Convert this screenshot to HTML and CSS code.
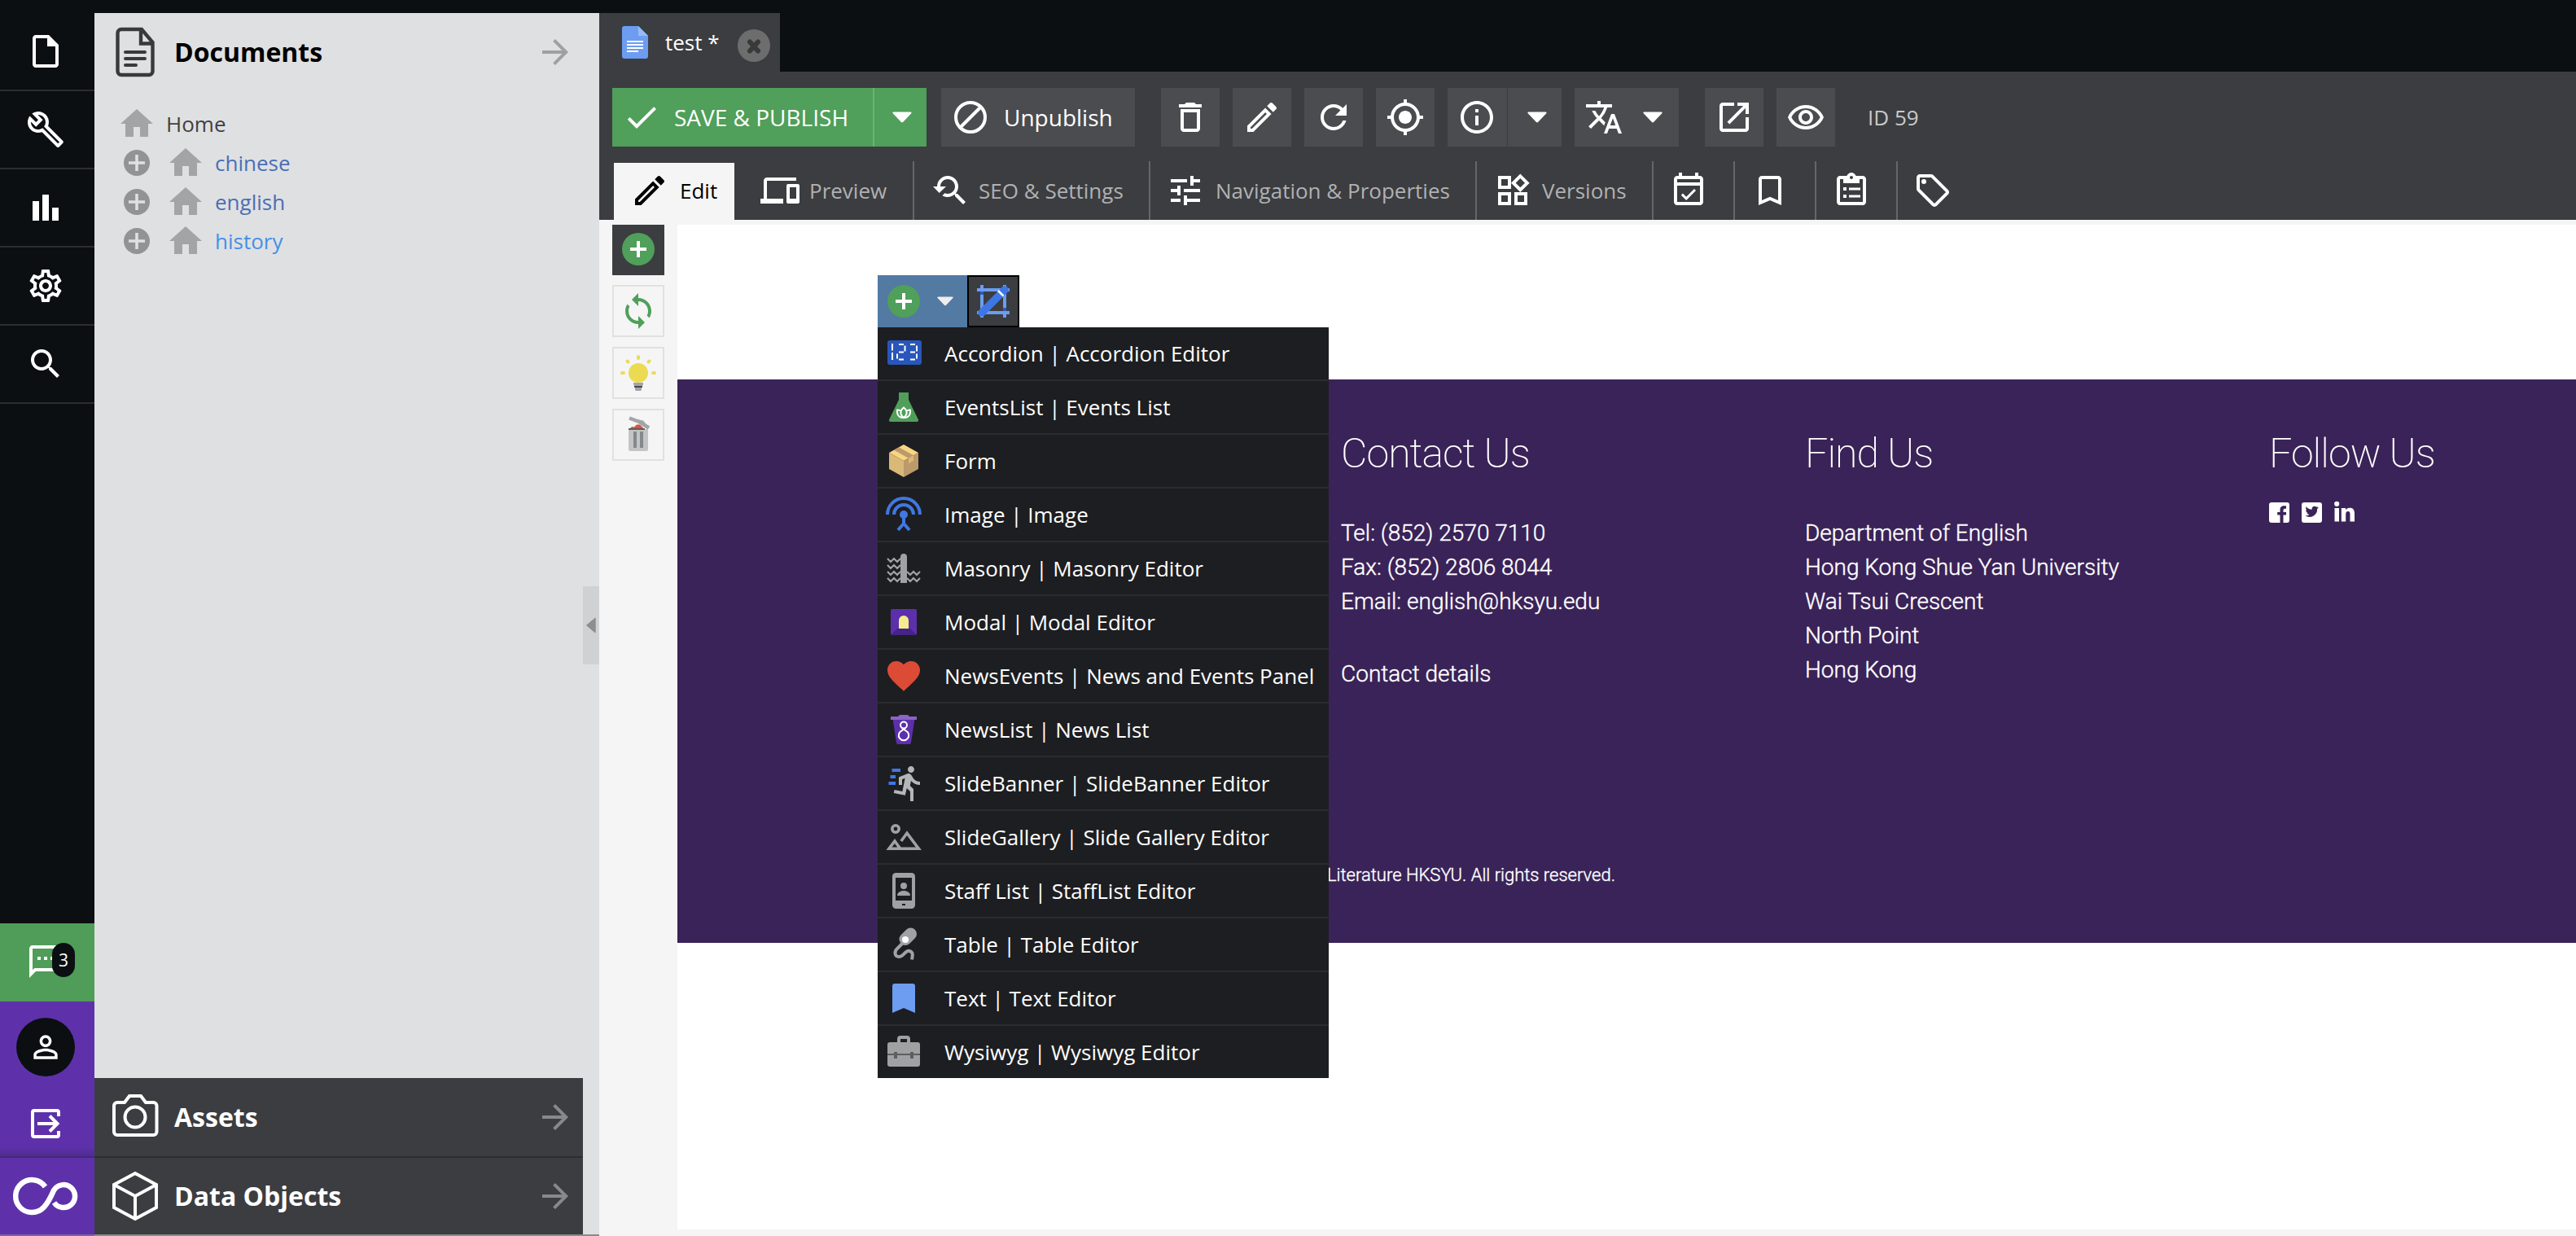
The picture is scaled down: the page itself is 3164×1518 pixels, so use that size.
FILE: index.html
```html
<!DOCTYPE html>
<html lang="en">
<head>
<meta charset="utf-8">
<title>test - Documents</title>
<link rel="stylesheet" href="styles.css">
</head>
<body>
<svg class="defs" aria-hidden="true">
  <symbol id="arrow" viewBox="0 0 24 24"><path d="M12 4l-1.41 1.41L16.17 11H4v2h12.17l-5.58 5.59L12 20l8-8z"/></symbol>
  <symbol id="home" viewBox="0 0 24 24"><path d="M10 20v-6h4v6h5v-8h3L12 3 2 12h3v8z"/></symbol>
  <symbol id="expand" viewBox="0 0 32 32"><circle cx="16" cy="16" r="16" fill="#929394"/><path d="M16 6v20M6 16h20" stroke="#dfe0e2" stroke-width="3.6"/></symbol>
  <symbol id="plus" viewBox="0 0 40 40"><circle cx="20" cy="20" r="20" fill="#509f5a"/><path d="M20 10v20M10 20h20" stroke="#fff" stroke-width="4"/></symbol>
  <symbol id="pencil" viewBox="0 0 24 24"><path d="M14.06 9.02l.92.92L5.92 19H5v-.92l9.06-9.06M17.66 3c-.25 0-.51.1-.7.29l-1.83 1.83 3.75 3.75 1.83-1.83c.39-.39.39-1.02 0-1.41l-2.34-2.34c-.2-.2-.45-.29-.71-.29zm-3.6 3.19L3 17.25V21h3.75L17.81 9.94l-3.75-3.75z"/></symbol>
  <symbol id="caret" viewBox="0 0 24 14"><path d="M1.5.5h21c1 0 1.4 1 .8 1.7l-10 10.6c-.8.8-1.8.8-2.6 0L.7 2.200C0 1.500.5.5 1.500.5z"/></symbol>
</svg>

<div class="app">
  <nav class="rail">
    <div class="rail-item"><svg class="ic" viewBox="0 0 24 24"><path d="M6 2c-1.1 0-1.99.9-1.99 2L4 20c0 1.1.89 2 1.99 2H18c1.1 0 2-.9 2-2V8l-6-6H6zm0 2h7v5h5v11H6V4z"/></svg></div>
    <div class="rail-item"><svg class="ic" viewBox="0 0 24 24"><path d="M22.61 18.99l-9.08-9.08c.93-2.34.45-5.1-1.44-7C9.79.61 6.21.4 3.66 2.26L7.5 6.11 6.08 7.52 2.25 3.69C.39 6.23.6 9.82 2.9 12.11c1.86 1.86 4.57 2.35 6.89 1.48l9.11 9.11c.39.39 1.02.39 1.41 0l2.3-2.3c.4-.38.4-1.01 0-1.41zm-3 1.6l-9.46-9.46c-.61.45-1.29.72-2 .82-1.36.2-2.79-.21-3.83-1.25C3.37 9.76 2.93 8.5 3 7.26l3.09 3.09 4.24-4.24-3.09-3.09c1.24-.07 2.49.37 3.44 1.31 1.08 1.08 1.49 2.57 1.24 3.96-.12.71-.42 1.37-.88 1.96l9.45 9.45-.88.89z"/></svg></div>
    <div class="rail-item"><svg class="ic" viewBox="0 0 24 24"><path d="M4 8h4v12H4zM10 4h4v16h-4zM16 12h4v8h-4z"/></svg></div>
    <div class="rail-item"><svg class="ic" viewBox="0 0 24 24"><path d="M19.43 12.98c.04-.32.07-.64.07-.98 0-.34-.03-.66-.07-.98l2.11-1.65c.19-.15.24-.42.12-.64l-2-3.46c-.09-.16-.26-.25-.44-.25-.06 0-.12.01-.17.03l-2.49 1c-.52-.4-1.08-.73-1.69-.98l-.38-2.65C14.46 2.18 14.25 2 14 2h-4c-.25 0-.46.18-.49.42l-.38 2.65c-.61.25-1.17.59-1.69.98l-2.49-1c-.06-.02-.12-.03-.18-.03-.17 0-.34.09-.43.25l-2 3.46c-.13.22-.07.49.12.64l2.110 1.65c-.04.32-.07.65-.07.98 0 .33.03.66.07.98l-2.110 1.65c-.19.15-.24.42-.12.64l2 3.46c.09.16.26.25.44.25.06 0 .12-.01.17-.03l2.490-1c.52.4 1.08.73 1.69.98l.38 2.65c.03.24.24.42.49.42h4c.25 0 .46-.18.49-.42l.38-2.65c.61-.25 1.17-.59 1.69-.98l2.490 1c.06.02.12.03.18.03.17 0 .34-.09.43-.25l2-3.46c.12-.22.07-.49-.12-.64l-2.110-1.65zm-1.98-1.71c.04.31.05.52.05.73 0 .21-.02.43-.05.73l-.14 1.13.89.7 1.08.84-.7 1.21-1.27-.51-1.04-.42-.9.68c-.43.32-.84.56-1.25.73l-1.06.43-.16 1.13-.2 1.35h-1.4l-.19-1.35-.16-1.13-1.06-.43c-.43-.18-.83-.41-1.23-.71l-.91-.7-1.06.43-1.27.51-.7-1.21 1.08-.84.89-.7-.14-1.13c-.03-.31-.05-.54-.05-.74s.02-.43.05-.73l.14-1.13-.89-.7-1.08-.84.7-1.21 1.27.51 1.04.42.9-.68c.43-.32.84-.56 1.25-.73l1.06-.43.16-1.13.2-1.35h1.39l.19 1.35.16 1.13 1.06.43c.43.18.83.41 1.23.71l.91.7 1.06-.43 1.27-.51.7 1.21-1.07.85-.89.7.14 1.13zM12 8c-2.21 0-4 1.79-4 4s1.79 4 4 4 4-1.79 4-4-1.79-4-4-4zm0 6c-1.1 0-2-.9-2-2s.9-2 2-2 2 .9 2 2-.9 2-2 2z"/></svg></div>
    <div class="rail-item"><svg class="ic" viewBox="0 0 24 24"><path d="M15.5 14h-.79l-.28-.27C15.41 12.59 16 11.11 16 9.5 16 5.91 13.09 3 9.5 3S3 5.91 3 9.5 5.91 16 9.5 16c1.61 0 3.09-.59 4.23-1.57l.27.28v.79l5 4.99L20.49 19l-4.99-5zm-6 0C7.01 14 5 11.99 5 9.5S7.01 5 9.5 5 14 7.01 14 9.5 11.99 14 9.5 14z"/></svg></div>
    <div class="rail-fill"></div>
    <div class="notify"><svg class="ic" viewBox="0 0 24 24"><path d="M20 2H4c-1.1 0-2 .9-2 2v18l4-4h14c1.1 0 2-.9 2-2V4c0-1.1-.9-2-2-2zm0 14H5.17L4 17.17V4h16v12zM7 9h2v2H7zm4 0h2v2h-2zm4 0h2v2h-2z"/></svg><span class="count">3</span></div>
    <div class="user"><span class="avatar"><svg class="person" viewBox="0 0 24 24"><path d="M12 5.9c1.16 0 2.1.94 2.1 2.1s-.94 2.1-2.1 2.1S9.9 9.16 9.900 8s.94-2.1 2.1-2.1m0 9c2.97 0 6.1 1.46 6.1 2.100v1.1H5.9V17c0-.64 3.13-2.1 6.1-2.1M12 4C9.79 4 8 5.79 8 8s1.79 4 4 4 4-1.79 4-4-1.79-4-4-4zm0 9c-2.67 0-8 1.34-8 4v3h16v-3c0-2.66-5.33-4-8-4z"/></svg></span></div>
    <div class="logout"><svg class="ic line" viewBox="0 0 48 48"><path d="M40 15V10a2 2 0 0 0-2-2H10a2 2 0 0 0-2 2v28a2 2 0 0 0 2 2h28a2 2 0 0 0 2-2v-5M14 24h24M29 14.500L38.500 24 29 33.500"/></svg></div>
    <div class="brand"><svg class="logo" viewBox="0 0 84 50"><path d="M41.500 13.500A20 20 0 1 0 40 38.500C46 32 48.500 26 52 18A14 14 0 1 1 52.500 33" fill="none" stroke="#fff" stroke-width="6.500"/></svg></div>
  </nav>

  <aside class="panel">
    <header class="panel-head">
      <svg class="head-ic" viewBox="0 0 72 72"><path d="M44 8H19a4.500 4.500 0 0 0-4.500 4.500v47A4.500 4.500 0 0 0 19 64h34a4.500 4.500 0 0 0 4.500-4.500V24zM43 8v17.500h15" fill="none" stroke="#3a3a3a" stroke-width="4.400"/><path d="M24 36h24M24 44h24M24 52h13" stroke="#3a3a3a" stroke-width="4" stroke-linecap="round"/></svg>
      <span class="head-t">Documents</span>
      <svg class="ic go"><use href="#arrow"/></svg>
    </header>
    <ul class="tree">
      <li class="node root"><svg class="house"><use href="#home"/></svg><span>Home</span></li>
      <li class="node"><svg class="exp"><use href="#expand"/></svg><svg class="house"><use href="#home"/></svg><span class="blue">chinese</span></li>
      <li class="node"><svg class="exp"><use href="#expand"/></svg><svg class="house"><use href="#home"/></svg><span class="blue">english</span></li>
      <li class="node"><svg class="exp"><use href="#expand"/></svg><svg class="house"><use href="#home"/></svg><span class="sky">history</span></li>
    </ul>
    <div class="grip"><svg class="grip-ic" viewBox="0 0 12 20"><path d="M11 1.500v17L1 10z" fill="#8e8e8f" stroke="#8e8e8f" stroke-width="1.500" stroke-linejoin="round"/></svg></div>
    <div class="folded">
      <svg class="head-ic line" viewBox="0 0 72 72"><path d="M36 10h7l6 8h9.500a4 4 0 0 1 4 4v32a4 4 0 0 1-4 4H14a4 4 0 0 1-4-4V22a4 4 0 0 1 4-4h9l6-8z"/><circle cx="36" cy="36" r="12.500"/></svg>
      <span class="head-t">Assets</span>
      <svg class="ic go"><use href="#arrow"/></svg>
    </div>
    <div class="folded last">
      <svg class="head-ic line" viewBox="0 0 72 72"><path d="M36 8L62 22V50L36 64 10 50V22zM10 22L36 36 62 22M36 36v28"/></svg>
      <span class="head-t">Data Objects</span>
      <svg class="ic go"><use href="#arrow"/></svg>
    </div>
  </aside>

  <main class="work">
    <div class="doc-tabs">
      <div class="doc-tab">
        <svg class="doc-ic" viewBox="0 0 32 40"><path d="M3 0h17l12 12v25a3 3 0 0 1-3 3H3a3 3 0 0 1-3-3V3a3 3 0 0 1 3-3z" fill="#6c9df0"/><path d="M20 0l12 12H20z" fill="#95bbf7"/><path d="M6 19h20M6 23h20M6 27h20M6 31h14" stroke="#fff" stroke-width="2"/></svg>
        <span class="doc-t">test *</span>
        <svg class="close" viewBox="0 0 40 40"><circle cx="20" cy="20" r="20" fill="#6d6d6e"/><path d="M15 15.500l10 11M25 15.500l-10 11" stroke="#38393b" stroke-width="6" stroke-linecap="round"/></svg>
      </div>
    </div>
    <div class="tools">
      <div class="save"><svg class="ic" viewBox="0 0 24 24"><path d="M9 16.170L4.830 12l-1.420 1.410L9 19 21 7l-1.410-1.410z"/></svg><span class="save-t">SAVE &amp; PUBLISH</span><span class="save-drop"><svg class="caret"><use href="#caret"/></svg></span></div>
      <div class="btn unpub"><svg class="ic line" viewBox="0 0 48 48"><circle cx="24" cy="24" r="18"/><path d="M11 37L37 11"/></svg><span>Unpublish</span></div>
      <div class="btn sq"><svg class="ic" viewBox="0 0 24 24"><path d="M16 9v10H8V9h8m-1.500-6h-5l-1 1H5v2h14V4h-3.500l-1-1zM18 7H6v12c0 1.100.9 2 2 2h8c1.100 0 2-.9 2-2V7z"/></svg></div>
      <div class="btn sq"><svg class="ic"><use href="#pencil"/></svg></div>
      <div class="btn sq"><svg class="ic" viewBox="0 0 24 24"><path d="M17.650 6.350C16.200 4.900 14.210 4 12 4c-4.420 0-7.990 3.580-7.990 8s3.570 8 7.990 8c3.730 0 6.840-2.550 7.730-6h-2.080c-.82 2.330-3.040 4-5.650 4-3.310 0-6-2.690-6-6s2.690-6 6-6c1.660 0 3.140.69 4.220 1.780L13 11h7V4l-2.350 2.350z"/></svg></div>
      <div class="btn sq"><svg class="ic" viewBox="0 0 24 24"><path d="M12 8c-2.210 0-4 1.790-4 4s1.790 4 4 4 4-1.790 4-4-1.790-4-4-4zm8.940 3c-.46-4.170-3.770-7.480-7.940-7.940V1h-2v2.060C6.830 3.520 3.520 6.830 3.060 11H1v2h2.060c.46 4.170 3.770 7.480 7.940 7.940V23h2v-2.060c4.170-.46 7.480-3.770 7.940-7.940H23v-2h-2.060zM12 19c-3.870 0-7-3.130-7-7s3.130-7 7-7 7 3.130 7 7-3.130 7-7 7z"/></svg></div>
      <div class="split"><div class="btn sq"><svg class="ic" viewBox="0 0 24 24"><path d="M11 7h2v2h-2zm0 4h2v6h-2zm1-9C6.480 2 2 6.480 2 12s4.480 10 10 10 10-4.480 10-10S17.520 2 12 2zm0 18c-4.410 0-8-3.590-8-8s3.590-8 8-8 8 3.590 8 8-3.590 8-8 8z"/></svg></div><div class="btn drop"><svg class="caret"><use href="#caret"/></svg></div></div>
      <div class="btn lang"><svg class="ic" viewBox="0 0 24 24"><path d="M12.870 15.070l-2.540-2.510.03-.03A17.520 17.520 0 0 0 14.070 6H17V4h-7V2H8v2H1v1.990h11.170C11.500 7.920 10.440 9.750 9 11.350 8.070 10.320 7.300 9.190 6.690 8h-2c.73 1.630 1.730 3.170 2.980 4.560l-5.090 5.020L4 19l5-5 3.110 3.110.76-2.040zM18.500 10h-2L12 22h2l1.120-3h4.750L21 22h2l-4.500-12zm-2.620 7l1.620-4.330L19.120 17h-3.240z"/></svg><svg class="caret"><use href="#caret"/></svg></div>
      <div class="btn sq open"><svg class="ic" viewBox="0 0 24 24"><path d="M19 19H5V5h7V3H5c-1.110 0-2 .9-2 2v14c0 1.100.89 2 2 2h14c1.100 0 2-.9 2-2v-7h-2v7zM14 3v2h3.590l-9.830 9.830 1.410 1.410L19 6.410V10h2V3h-7z"/></svg></div>
      <div class="btn sq"><svg class="ic" viewBox="0 -.5 24 24"><path d="M12 6c3.790 0 7.170 2.130 8.820 5.500C19.170 14.870 15.790 17 12 17s-7.170-2.130-8.820-5.500C4.830 8.130 8.210 6 12 6m0-2C7 4 2.730 7.110 1 11.500 2.730 15.890 7 19 12 19s9.270-3.110 11-7.500C21.270 7.110 17 4 12 4zm0 5c1.380 0 2.500 1.120 2.500 2.500S13.380 14 12 14s-2.500-1.120-2.500-2.500S10.620 9 12 9m0-2c-2.480 0-4.500 2.020-4.500 4.500S9.520 16 12 16s4.500-2.020 4.500-4.500S14.480 7 12 7z"/></svg></div>
      <span class="doc-id">ID 59</span>
    </div>
    <div class="tabs">
      <div class="tab active"><svg class="ic"><use href="#pencil"/></svg><span>Edit</span></div>
      <div class="tab preview"><svg class="ic" viewBox="0 0 24 24"><path d="M4 6h18V4H4c-1.100 0-2 .9-2 2v11H0v3h14v-3H4V6zm19 2h-6c-.55 0-1 .45-1 1v10c0 .55.45 1 1 1h6c.55 0 1-.45 1-1V9c0-.55-.45-1-1-1zm-1 9h-4v-7h4v7z"/></svg><span>Preview</span></div>
      <div class="tab seo"><svg class="ic" viewBox="0 0 24 24"><path d="M17.010 14h-.8l-.27-.27c.98-1.140 1.570-2.610 1.570-4.230 0-3.590-2.910-6.500-6.500-6.500s-6.500 3-6.500 6.500H2l3.840 4 4.160-4H6.510C6.510 7 8.530 5 11.010 5s4.500 2.010 4.500 4.500c0 2.480-2.020 4.500-4.500 4.500-.65 0-1.260-.14-1.820-.38L7.710 15.100c.97.57 2.090.9 3.300.9 1.610 0 3.080-.59 4.220-1.570l.27.27v.79l5.010 5L22 19l-4.990-5z"/></svg><span>SEO &amp; Settings</span></div>
      <div class="tab nav"><svg class="ic" viewBox="0 0 24 24"><path d="M3 17v2h6v-2H3zM3 5v2h10V5H3zm10 16v-2h8v-2h-8v-2h-2v6h2zM7 9v2H3v2h4v2h2V9H7zm14 4v-2H11v2h10zm-6-4h2V7h4V5h-4V3h-2v6z"/></svg><span>Navigation &amp; Properties</span></div>
      <div class="tab ver"><svg class="ic" viewBox="0 0 24 24"><path d="M16.660 4.520l2.830 2.830-2.830 2.830-2.830-2.830 2.830-2.830M9 5v4H5V5h4m10 10v4h-4v-4h4M9 15v4H5v-4h4m7.660-13.310L11 7.340 16.660 13l5.660-5.660-5.660-5.650zM11 3H3v8h8V3zm10 10h-8v8h8v-8zm-10 0H3v8h8v-8z"/></svg><span>Versions</span></div>
      <div class="tab mini"><svg class="ic" viewBox="0 0 24 24"><path d="M16.530 12.060L15.470 11l-4.880 4.880-2.120-2.120-1.060 1.060L10.590 18l5.940-5.940zM19 3h-1V1h-2v2H8V1H6v2H5c-1.110 0-1.990.9-1.990 2L3 19c0 1.100.89 2 2 2h14c1.100 0 2-.9 2-2V5c0-1.100-.9-2-2-2zm0 16H5V9h14v10zm0-12H5V5h14v2z"/></svg></div>
      <div class="tab mini"><svg class="ic" viewBox="0 0 24 24"><path d="M17 3H7c-1.100 0-1.990.9-1.990 2L5 21l7-3 7 3V5c0-1.100-.9-2-2-2zm0 15l-5-2.180L7 18V5h10v13z"/></svg></div>
      <div class="tab mini"><svg class="ic" viewBox="0 0 24 24"><path d="M19 3h-4.180C14.400 1.840 13.300 1 12 1s-2.400.84-2.820 2H5c-1.100 0-2 .9-2 2v14c0 1.100.9 2 2 2h14c1.100 0 2-.9 2-2V5c0-1.100-.9-2-2-2zm-7 0c.55 0 1 .45 1 1s-.45 1-1 1-1-.45-1-1 .45-1 1-1zm7 16H5V5h2v2.500h10V5h2v14zM7 10h2v2H7zm3.500.3h7v1.500h-7zM7 14.500h2v2H7zm3.500.3h7v1.500h-7z"/></svg></div>
      <div class="tab mini"><svg class="ic" viewBox="0 0 24 24"><path d="M21.410 11.580l-9-9C12.050 2.220 11.550 2 11 2H4c-1.100 0-2 .9-2 2v7c0 .55.22 1.050.59 1.420l9 9c.36.36.86.58 1.410.58s1.050-.22 1.410-.59l7-7c.37-.36.59-.86.59-1.410s-.23-1.060-.59-1.420zM13 20.010L4 11V4h7v-.01l9 9-7 7.020z"/><circle cx="6.500" cy="6.500" r="1.500"/></svg></div>
    </div>

    <div class="editor">
      <div class="side-tools">
        <div class="side dark"><svg class="forty"><use href="#plus"/></svg></div>
        <div class="side"><svg class="ic green" viewBox="0 0 24 24"><path d="M12 4V1L8 5l4 4V6c3.310 0 6 2.690 6 6 0 1.010-.25 1.970-.7 2.800l1.460 1.460C19.540 15.030 20 13.570 20 12c0-4.420-3.580-8-8-8zm0 14c-3.310 0-6-2.690-6-6 0-1.010.25-1.970.7-2.800L5.240 7.740C4.460 8.970 4 10.430 4 12c0 4.420 3.580 8 8 8v3l4-4-4-4v3z"/></svg></div>
        <div class="side"><svg class="ic" viewBox="0 0 48 48"><path d="M24 4v2M10.500 9.500l1 1M37.500 9.500l-1 1M4 24h2M42 24h2" stroke="#ebdb59" stroke-width="4" stroke-linecap="round"/><circle cx="24" cy="24" r="12" fill="#ebdb52"/><path d="M18 36h12v2l-1 2H19l-1-2z" fill="#a3a4a6"/><path d="M19 40h10v2H19z" fill="#4a4a55"/><path d="M20 42h8v3l-1 1h-6l-1-1z" fill="#a3a4a6"/></svg></div>
        <div class="side"><svg class="ic" viewBox="0 0 48 48"><path d="M14 16l2-2 3 .500 3-3 4 0 4 4v2z" fill="#dd4f3b"/><path d="M12 17h24v25a2 2 0 0 1-2 2H14a2 2 0 0 1-2-2z" fill="#c3c4c5"/><path d="M12 16h20v2H12z" fill="#5d5e60"/><path d="M20 20v20M28 20v20" stroke="#87888a" stroke-width="4"/><path d="M13 3.500l12 4.500 12 7.500" stroke="#a3a4a6" stroke-width="4.500" fill="none"/><path d="M22 5l8 1.500 4 5" fill="#a3a4a6"/></svg></div>
      </div>
      <div class="page">
        <div class="blank">
          <div class="block-bar">
            <div class="block-add"><svg class="forty"><use href="#plus"/></svg><svg class="mini-caret"><use href="#caret"/></svg></div>
            <div class="block-edit"><svg class="forty" viewBox="0 0 40 40"><path d="M6 0v40M34 0v40M0 6h40M0 34h40" stroke="#6c9df0" stroke-width="4"/><path d="M6 8v4M34 28v4" stroke="#2a5bc4" stroke-width="4"/><path d="M6 34L34 6" stroke="#3d77e6" stroke-width="9.500" stroke-linecap="round"/><path d="M26 7l6.500 6.500" stroke="#fff" stroke-width="2.500"/></svg></div>
            <ul class="menu">
              <li><svg class="ic" viewBox="0 0 48 48"><rect x="4" y="8" width="42" height="30" rx="3" fill="#2956bb"/><path d="M10 12v8.500M10 23v9M18 13h6M25.500 14.500v7M18 22.500h6M16 24.500v6M18 31.500h6M32 13h6M40 14.500v7M32 22.500h6M40 24.500v6M32 31.500h6" stroke="#fff" stroke-width="2"/></svg><span>Accordion | Accordion Editor</span></li>
              <li><svg class="ic" viewBox="0 0 48 48"><path d="M18 6h12v9l12 24.500a2 2 0 0 1-1.500 2.500h-33A2 2 0 0 1 6 39.500L18 15z" fill="#519e5b"/><path d="M24 37c-5.500-4-4-9.500 0-12.500 4 3 5.500 8.500 0 12.500zM24 37c-6 .5-8.500-4-8-9.500 3-.5 4 .5 5 2M24 37c6 .5 8.500-4 8-9.500-3-.5-4 .5-5 2" fill="none" stroke="#fff" stroke-width="2"/></svg><span>EventsList | Events List</span></li>
              <li><svg class="ic" viewBox="0 0 48 48"><path d="M24 4l18 10-18 10L6 14z" fill="#f6d681"/><path d="M6 14l18 10v20L6 34z" fill="#dab877"/><path d="M42 14L24 24v20l18-10z" fill="#bc9a6c"/><path d="M12 10.700l6-3.400 18 10-6 3.400z" fill="#bc9a6c"/><path d="M30 20.700l6-3.400v6.500l-6 3.400z" fill="#dab877"/></svg><span>Form</span></li>
              <li><svg class="ic" viewBox="0 0 48 48"><path d="M4 24a20 20 0 0 1 40 0M12 24a12 12 0 0 1 24 0M24 24v11M17 43l7-8 7 8" fill="none" stroke="#4077e2" stroke-width="4"/><circle cx="24" cy="24" r="5" fill="#4077e2"/></svg><span>Image | Image</span></li>
              <li><svg class="ic" viewBox="0 0 48 48"><path d="M20 42V10a4 4 0 0 1 8 0v32z" fill="#a0a1a3"/><path d="M4 12l4 4 4-4 4 4 4-4M4 20l4 4 4-4 4 4 4-4M4 28l4 4 4-4 4 4 4-4M4 36l4 4 4-4 4 4 4-4M28 28l4 4 4-4 4 4 4-4M28 36l4 4 4-4 4 4 4-4" fill="none" stroke="#a0a1a3" stroke-width="2.200"/></svg><span>Masonry | Masonry Editor</span></li>
              <li><svg class="ic" viewBox="0 0 48 48"><rect x="8" y="8" width="32" height="32" rx="2" fill="#5c30ab"/><path d="M16 32h16l7.500 7.500-1.500.5H10l-1.500-.5z" fill="#44238a"/><path d="M18 32V22a6 6 0 0 1 12 0v10z" fill="#f5ed8c"/></svg><span>Modal | Modal Editor</span></li>
              <li><svg class="ic" viewBox="0 0 24 24"><path d="M12 21.350l-1.450-1.320C5.400 15.360 2 12.280 2 8.500 2 5.420 4.420 3 7.500 3c1.740 0 3.410.81 4.500 2.090C13.090 3.810 14.760 3 16.500 3 19.580 3 22 5.420 22 8.500c0 3.780-3.400 6.860-8.550 11.540L12 21.350z" fill="#dc4b36"/></svg><span>NewsEvents | News and Events Panel</span></li>
              <li><svg class="ic" viewBox="0 0 48 48"><path d="M10.500 11h27L33 40a2 2 0 0 1-2 2H17a2 2 0 0 1-2-2z" fill="#5c30ab"/><path d="M8 8h9l2-2h10l2 2h9v4H8z" fill="#8b64c4"/><circle cx="24" cy="18.500" r="4" fill="none" stroke="#fff" stroke-width="2"/><path d="M21.500 22L26.500 25.300A6.200 6.200 0 1 1 21.500 25.300L26.500 22" fill="none" stroke="#fff" stroke-width="2"/></svg><span>NewsList | News List</span></li>
              <li><svg class="ic" viewBox="0 0 48 48"><path d="M9.500 8H20M7.500 16H14M5.500 24H14" stroke="#4077e2" stroke-width="4"/><path transform="translate(6 0) scale(2)" fill="#b5b6b8" d="M13.490 5.480c1.100 0 2-.9 2-2s-.9-2-2-2-2 .9-2 2 .9 2 2 2zm-3.600 13.900l1-4.400 2.100 2v6h2v-7.500l-2.100-2 .6-3c1.300 1.500 3.300 2.500 5.500 2.500v-2c-1.900 0-3.500-1-4.300-2.400l-1-1.600c-.4-.6-1-1-1.700-1-.3 0-.5.1-.8.1l-5.200 2.200v4.700h2v-3.400l1.800-.7-1.600 8.100-4.900-1-.4 2 7 1.400z"/></svg><span>SlideBanner | SlideBanner Editor</span></li>
              <li><svg class="ic" viewBox="0 0 48 48"><g fill="none" stroke="#a0a1a3" stroke-width="3.600"><circle cx="14" cy="14" r="4.200"/><path d="M19.500 38L13 29 6 38.200H42.300L28 19.200 20.800 29"/></g></svg><span>SlideGallery | Slide Gallery Editor</span></li>
              <li><svg class="ic" viewBox="0 0 48 48"><rect x="10" y="2" width="28" height="44" rx="4.500" fill="#a0a1a3"/><path d="M14 8h20v28H14zM22 40h4v2h-4z" fill="#1d1e21"/><circle cx="24" cy="18" r="4" fill="#a0a1a3"/><path d="M16 30c0-3.500 3.500-6 8-6s8 2.500 8 6z" fill="#a0a1a3"/></svg><span>Staff List | StaffList Editor</span></li>
              <li><svg class="ic" viewBox="0 0 48 48"><path d="M26 17.500l6.500-6.500" stroke="#a0a1a3" stroke-width="15" stroke-linecap="round"/><path d="M23 22l-8 8c-3 4-1.500 9 3 9 6 0 8-8.500 13-7 5 1.500 4 5 3 10.500" fill="none" stroke="#a0a1a3" stroke-width="4"/><circle cx="26" cy="18" r="4" fill="#fff"/></svg><span>Table | Table Editor</span></li>
              <li><svg class="ic" viewBox="0 0 48 48"><path d="M10 42V9a3 3 0 0 1 3-3h22a3 3 0 0 1 3 3v33l-14-6z" fill="#6c9df0"/></svg><span>Text | Text Editor</span></li>
              <li><svg class="ic" viewBox="0 0 48 48"><path d="M18 14V8a2 2 0 0 1 2-2h8a2 2 0 0 1 2 2v6" fill="none" stroke="#a0a1a3" stroke-width="4"/><rect x="4" y="12" width="40" height="30" rx="3" fill="#a0a1a3"/><path d="M4 27h40" stroke="#5d5e60" stroke-width="2"/><path d="M14 24v8M34 24v8" stroke="#5d5e60" stroke-width="4"/></svg><span>Wysiwyg | Wysiwyg Editor</span></li>
            </ul>
          </div>
        </div>
        <footer class="foot">
          <div class="cols">
            <section class="col">
              <h2>Contact Us</h2>
              <p>Tel: (852) 2570 7110<br>Fax: (852) 2806 8044<br>Email: english@hksyu.edu</p>
              <p class="more">Contact details</p>
            </section>
            <section class="col">
              <h2>Find Us</h2>
              <p>Department of English<br>Hong Kong Shue Yan University<br>Wai Tsui Crescent<br>North Point<br>Hong Kong</p>
            </section>
            <section class="col">
              <h2>Follow Us</h2>
              <div class="social">
                <svg viewBox="0 0 26 28"><path fill-rule="evenodd" d="M3 2h19a3 3 0 0 1 3 3v19a3 3 0 0 1-3 3h-4.500v-9.500H21v-3.500h-3.500V12c0-1.500.7-2.200 2-2.200H21V6.300h-2.500c-3.500 0-5 2-5 5V14h-3.300v3.500h3.300V27H3a3 3 0 0 1-3-3V5a3 3 0 0 1 3-3z"/></svg>
                <svg viewBox="0 0 26 28"><path fill-rule="evenodd" d="M3 2h19a3 3 0 0 1 3 3v19a3 3 0 0 1-3 3H3a3 3 0 0 1-3-3V5a3 3 0 0 1 3-3zM21 8.300c-.6.300-1.200.4-1.900.5.600-.4 1.200-1 1.400-1.800-.6.400-1.300.6-2.100.8a3.400 3.400 0 0 0-5.800 3C9.800 10.700 7.300 9.400 5.600 7.300c-.9 1.600-.4 3.400 1 4.400-.5 0-1-.1-1.500-.4 0 1.600 1.100 3 2.700 3.300-.5.100-1 .1-1.500 0 .4 1.300 1.700 2.300 3.100 2.300A6.700 6.700 0 0 1 4.400 18.300 9.400 9.400 0 0 0 19.100 10c.8-.5 1.400-1.100 1.900-1.700z"/></svg>
                <svg viewBox="0 0 26 28"><path d="M.5 9H6v16.500H.5zM8.800 9h5.200v2.300c1-1.700 2.600-2.600 5-2.600 4.500 0 6 2.600 6 7.300v9.500h-5.500V17c0-2.600-.5-4-2.500-4s-2.800 1.500-2.800 4v8.500H8.800z"/><circle cx="3.200" cy="3.800" r="3.100"/></svg>
              </div>
            </section>
          </div>
          <p class="copy">Literature HKSYU. All rights reserved.</p>
        </footer>
      </div>
    </div>
  </main>
</div>
</body>
</html>
```
FILE: styles.css
```css
* { box-sizing: border-box; }
body, h2, p, ul { margin: 0; padding: 0; }
ul { list-style: none; }
body {
  width: 3164px; height: 1518px; overflow: hidden;
  background: #0b0f12; color: #fff;
  font-family: "Open Sans", "Noto Sans", sans-serif; font-size: 26px;
}
.defs { position: absolute; width: 0; height: 0; }
svg { display: block; flex: none; fill: currentColor; }
.ic { width: 48px; height: 48px; }
.line { fill: none; stroke: currentColor; stroke-width: 4; }
.forty { width: 40px; height: 40px; }
.caret { width: 24px; height: 14px; }

.app { display: grid; grid-template-columns: 116px 620px 1fr; height: 1518px; padding-top: 16px; }

/* icon rail */
.rail { display: flex; flex-direction: column; border-bottom: 2px solid #7c64a6; }
.rail-item { height: 96px; padding-right: 4px; border-bottom: 2px solid #2c2d31; display: flex; align-items: center; justify-content: center; }
.rail-fill { flex: 1; }
.notify, .user, .logout, .brand { display: flex; align-items: center; justify-content: center; padding-right: 4px; }
.notify { height: 96px; background: #4f9d58; position: relative; padding-bottom: 2px; }
.count {
  position: absolute; left: 64px; top: 24px; width: 28px; height: 42px; border-radius: 14px;
  background: #0b0f12; font-size: 21px; line-height: 42px; text-align: center;
}
.user { height: 112px; background: #5e31ab; }
.avatar { width: 72px; height: 72px; border-radius: 50%; background: #0b0f12; display: flex; align-items: center; justify-content: center; }
.person { width: 44px; height: 44px; }
.logout { height: 80px; padding-bottom: 2px; border-bottom: 2px solid #44287a; background: linear-gradient(#5e31ab 85%, #4f2c90); }
.brand { height: 94px; background: #5e31ab; }
.logo { width: 84px; height: 50px; }

/* left panel */
.panel { position: relative; display: flex; flex-direction: column; background: #dfe0e2; border-bottom: 2px solid #8a8a8c; }
.panel-head, .folded { display: flex; align-items: center; padding-left: 14px; }
.panel-head { height: 96px; color: #000; }
.head-ic { width: 72px; height: 72px; }
.head-t { margin-left: 12px; font-size: 32px; font-weight: 700; line-height: 44px; flex: 1; }
.go { margin-right: 10px; color: #9fa0a2; }
.panel-head .go { margin-right: 30px; }
.tree { flex: 1; padding: 16px 0 0 28px; }
.node { display: flex; align-items: center; height: 48px; }
.root { color: #3f4043; }
.exp { width: 32px; height: 32px; margin-left: 8px; margin-right: 20px; }
.house { width: 48px; height: 48px; color: #a3a4a6; margin-right: 12px; }
.blue { color: #4a6fb5; }
.sky { color: #4590e6; }
.folded { width: 600px; height: 98px; background: #3c3d40; border-bottom: 2px solid #2c2d30; }
.folded .go { color: #88898b; }
.last { height: 94px; border-bottom: 0; }
.grip { position: absolute; right: 0; top: 704px; width: 20px; height: 96px; background: #d0d1d3; display: flex; align-items: center; justify-content: center; }
.grip-ic { width: 12px; height: 20px; }

/* document tabs and toolbar */
.work { display: flex; flex-direction: column; min-width: 0; }
.doc-tab { width: 222px; height: 72px; background: #3c3d40; display: flex; padding-left: 28px; }
.doc-ic { width: 32px; height: 40px; margin-top: 16px; }
.doc-t { margin-left: 21px; line-height: 72px; flex: 1; }
.close { width: 40px; height: 40px; margin: 20px 12px 0 0; }
.tools { height: 112px; background: #3c3d40; display: flex; align-items: center; padding-left: 16px; }
.save { width: 386px; height: 72px; background: #509f5a; display: flex; align-items: center; padding-left: 12px; font-size: 28px; }
.save-t { margin-left: 16px; padding-bottom: 1px; flex: 1; }
.save-drop { width: 66px; height: 72px; padding-left: 3px; border-left: 2px solid #6fb178; display: flex; align-items: center; justify-content: center; }
.btn { height: 72px; background: #4b4c4f; display: flex; align-items: center; justify-content: center; margin-right: 16px; }
.unpub { width: 238px; margin: 0 32px 0 18px; padding-left: 12px; justify-content: flex-start; font-size: 28px; gap: 17px; }
.unpub span { padding-bottom: 1px; }
.sq { width: 72px; }
.split { display: flex; }
.split .sq { width: 73px; margin-right: 1px; padding-right: 1px; }
.drop { width: 66px; padding-left: 5px; }
.lang { width: 128px; gap: 24px; padding-right: 9px; margin-right: 32px; }
.doc-id { margin-left: 24px; color: #c9cacb; }

.tabs { height: 70px; background: #3c3d40; display: flex; align-items: flex-end; padding-left: 18px; }
.tab { height: 72px; display: flex; align-items: center; color: #fff; border-left: 2px solid #65666a; }
.tab span { color: #b0b1b3; }
.tab.active, .tab.preview { height: 70px; border-left: 0; }
.active { width: 148px; padding: 0 0 2px 20px; background: #f5f5f5; }
.tab.active { color: #000; }
.tab.active span { margin-left: 13px; color: #000; }
.preview { width: 219px; padding: 0 0 2px 32px; }
.preview span { margin-left: 12px; }
.seo { width: 290px; padding-left: 19px; }
.seo span { margin-left: 12px; }
.nav { width: 401px; padding-left: 19px; }
.nav span { margin-left: 13px; }
.ver { width: 217px; padding-left: 20px; }
.ver span { margin-left: 12px; }
.mini { width: 100px; padding-left: 19px; }

/* editing area */
.editor { flex: 1; display: flex; background: #f5f5f5; padding: 6px 0 8px 16px; }
.side-tools { width: 80px; display: flex; flex-direction: column; gap: 12px; }
.side { width: 64px; height: 64px; border: 2px solid #e1e1e2; display: flex; align-items: center; justify-content: center; }
.dark { height: 62px; padding-bottom: 2px; background: #3c3d40; border: 0; }
.green { color: #509f5a; }
.page { flex: 1; background: #fff; min-width: 0; }
.blank { height: 190px; padding: 62px 0 0 246px; }
.block-bar { position: relative; display: flex; width: 174px; height: 64px; }
.block-add { width: 110px; background: #527aa3; display: flex; align-items: center; padding-left: 12px; gap: 21px; color: #eee; }
.mini-caret { width: 20px; height: 12px; }
.block-edit { width: 64px; background: #3c3d40; border: 2px solid #000; display: flex; align-items: center; padding-left: 10px; }
.menu { position: absolute; left: 0; top: 64px; width: 554px; background: #1d1e21; z-index: 2; }
.menu li { height: 66px; border-bottom: 2px solid #2b2c30; display: flex; align-items: center; padding-left: 8px; }
.menu li:last-child { height: 64px; border-bottom: 0; }
.menu span { margin-left: 26px; white-space: pre; }

.foot { height: 692px; background: #3a2358; padding: 61px 0 0 815px; font-family: Roboto, sans-serif; font-size: 28px; font-weight: 300; line-height: 42px; }
.foot p { -webkit-text-stroke: .4px #fff; }
.cols { display: grid; grid-template-columns: 570px 570px 1fr; height: 530px; }
.foot h2 { font-size: 50px; font-weight: 200; letter-spacing: -1px; line-height: 60px; margin-bottom: 47px; }
.more { margin-top: 47px; }
.social { display: flex; gap: 14px; margin-top: -19px; }
.social svg { width: 26px; height: 28px; }
.foot .copy { font-size: 22px; line-height: 30px; margin: 3px 0 0 -17px; }
```
